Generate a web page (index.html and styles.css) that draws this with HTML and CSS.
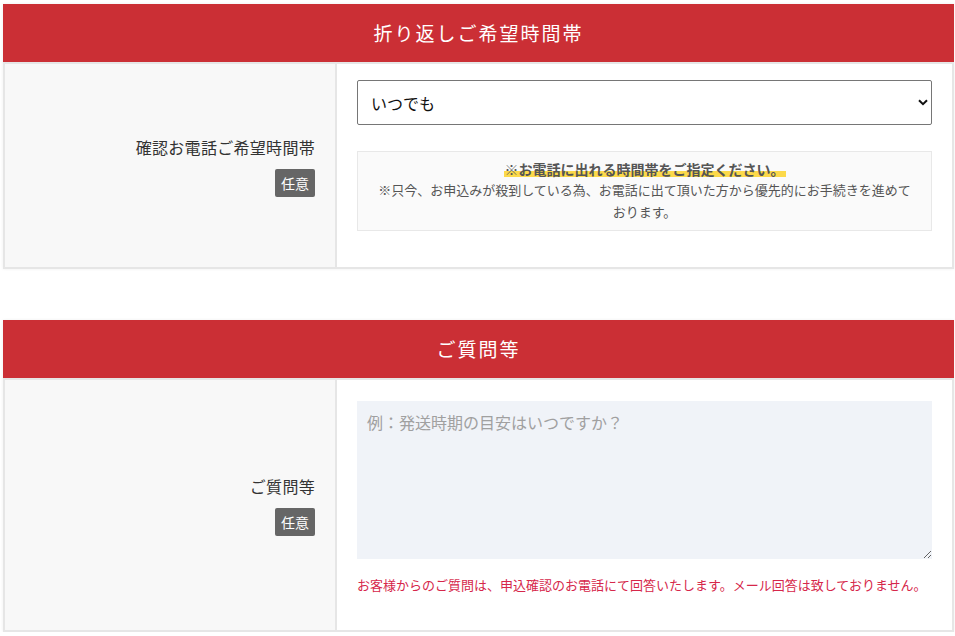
FILE: index.html
```html
<!DOCTYPE html>
<html lang="ja">
<head>
<meta charset="utf-8">
<link rel="stylesheet" href="styles.css">
</head>
<body>
<div class="page">
  <section class="block">
    <h2 class="block-title">折り返しご希望時間帯</h2>
    <div class="row">
      <div class="label-cell">
        <div class="label">確認お電話ご希望時間帯</div>
        <span class="badge">任意</span>
      </div>
      <div class="field-cell">
        <div class="select-wrap">
          <select class="select">
            <option>いつでも</option>
          </select>
          <svg class="chevron" width="10" height="7" viewBox="0 0 10 7"><path d="M1 1.2 L5 5.2 L9 1.2" fill="none" stroke="#111" stroke-width="2"/></svg>
        </div>
        <div class="notice">
          <p class="notice-title"><span class="marker">※お電話に出れる時間帯をご指定ください。</span></p>
          <p class="notice-body">※只今、お申込みが殺到している為、お電話に出て頂いた方から優先的にお手続きを進めております。</p>
        </div>
      </div>
    </div>
  </section>

  <section class="block block-second">
    <h2 class="block-title">ご質問等</h2>
    <div class="row">
      <div class="label-cell">
        <div class="label">ご質問等</div>
        <span class="badge">任意</span>
      </div>
      <div class="field-cell field-cell-2">
        <textarea class="textarea" placeholder="例：発送時期の目安はいつですか？"></textarea>
        <p class="note">お客様からのご質問は、申込確認のお電話にて回答いたします。メール回答は致しておりません。</p>
      </div>
    </div>
  </section>
</div>
</body>
</html>
```
FILE: styles.css
```css
* { box-sizing: border-box; }
html, body {
  margin: 0;
  padding: 0;
  background: #fff;
  font-family: "Noto Sans CJK JP", "Noto Sans", sans-serif;
  color: #333;
}
.page {
  padding: 4px 1px 0 3px;
}
.block {
  box-shadow: 0 0 3px rgba(0,0,0,0.07);
}
.block-second {
  margin-top: 51px;
}
.block-title {
  margin: 0;
  height: 58px;
  background: #cb2f35;
  color: #fff;
  font-size: 19px;
  font-weight: 400;
  letter-spacing: 2px;
  text-align: center;
  line-height: 58px;
}
.row {
  display: flex;
  border: 2px solid #e6e6e6;
}
.label-cell {
  width: 332px;
  flex: none;
  background: #f8f8f8;
  border-right: 2px solid #e6e6e6;
  padding-right: 20px;
  display: flex;
  flex-direction: column;
  justify-content: center;
  align-items: flex-end;
}
.label {
  font-size: 16px;
  line-height: 24px;
  letter-spacing: 0.3px;
  color: #333;
}
.badge {
  display: block;
  margin-top: 10px;
  background: #666;
  color: #fff;
  font-size: 14px;
  line-height: 28px;
  height: 28px;
  padding: 0 6px;
  border-radius: 2px;
}
.field-cell {
  flex: 1;
  background: #fff;
  padding: 16px 20px 36px 20px;
}
.select-wrap {
  position: relative;
}
.select {
  display: block;
  width: 100%;
  height: 45px;
  appearance: none;
  -webkit-appearance: none;
  border: 1px solid #767676;
  border-radius: 2px;
  background: #fff;
  font-family: "Noto Sans CJK JP", sans-serif;
  font-size: 16px;
  color: #111;
  padding: 0 13px;
}
.chevron {
  position: absolute;
  right: 4px;
  top: 19px;
}
.notice {
  margin-top: 26px;
  background: #fafafa;
  border: 1px solid #e8e8e8;
  padding: 7px 18px;
  text-align: center;
}
.notice-title {
  margin: 0;
  font-size: 14px;
  line-height: 20px;
  font-weight: 700;
  color: #555;
}
.marker {
  background: linear-gradient(transparent 62%, #fcd94a 62%, #fcd94a 88%, transparent 88%);
  padding: 0 1px;
}
.notice-body {
  margin: 0;
  font-size: 13px;
  line-height: 22px;
  color: #555;
}
.field-cell-2 {
  padding: 21px 20px 34px 20px;
}
.textarea {
  display: block;
  width: 100%;
  height: 158px;
  background: #f0f3f8;
  border: none;
  border-radius: 0;
  padding: 10px 10px;
  font-family: "Noto Sans CJK JP", sans-serif;
  font-size: 16px;
  line-height: 22px;
  color: #333;
  resize: vertical;
}
.textarea::placeholder {
  color: #a0a0a0;
}
.note {
  margin: 15px 0 0 0;
  font-size: 13px;
  line-height: 22px;
  color: #d6274a;
}
```
